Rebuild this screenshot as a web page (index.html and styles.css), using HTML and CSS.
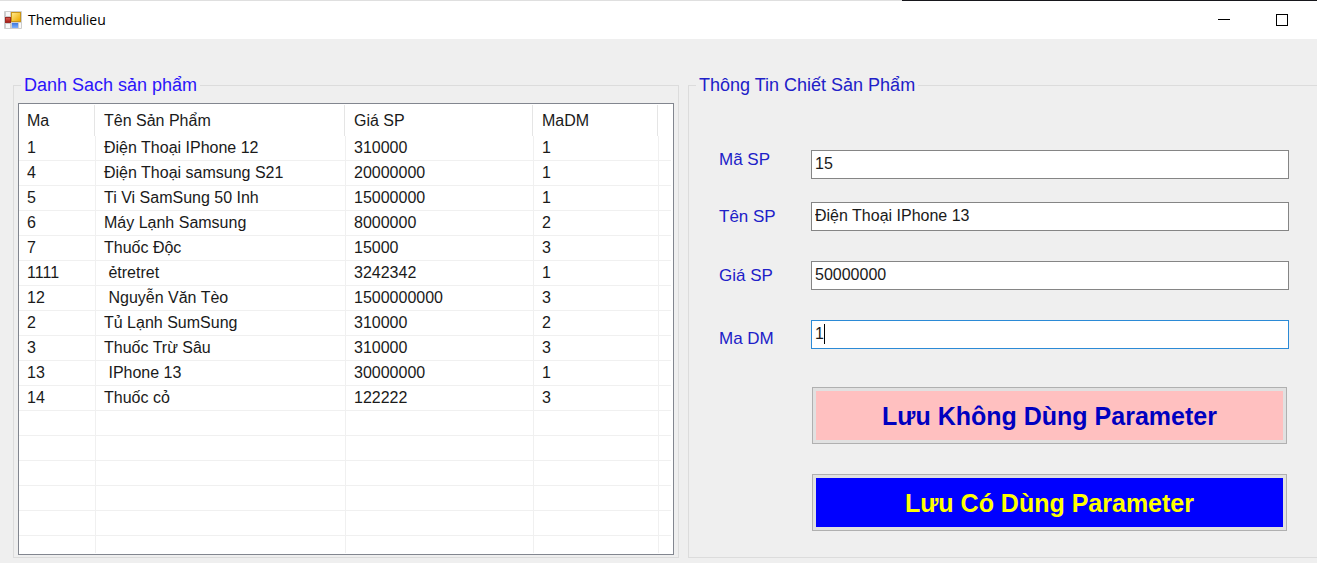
FILE: index.html
```html
<!DOCTYPE html>
<html lang="vi">
<head>
<meta charset="utf-8">
<title>Themdulieu</title>
<link rel="stylesheet" href="styles.css">
</head>
<body>
<header class="titlebar">
  <svg class="app-icon" width="18" height="18" viewBox="0 0 18 18" aria-hidden="true">
    <defs>
      <linearGradient id="gold" x1="0" y1="0" x2="1" y2="1"><stop offset="0" stop-color="#ffe98a"/><stop offset="1" stop-color="#eda900"/></linearGradient>
      <linearGradient id="sky" x1="0" y1="0" x2="0" y2="1"><stop offset="0" stop-color="#3f78dc"/><stop offset="1" stop-color="#7db0ff"/></linearGradient>
      <linearGradient id="brick" x1="0" y1="0" x2="0" y2="1"><stop offset="0" stop-color="#d9584c"/><stop offset="1" stop-color="#a81c16"/></linearGradient>
    </defs>
    <rect width="18" height="18" rx="1" fill="#cdcdcd"/>
    <path d="M2 1h4v4H2zM2 13h4v4H2zM15 12h2v5h-2z" fill="#f8f8f8"/>
    <rect x="7" y="1" width="10" height="10" fill="#c99519"/>
    <rect x="8" y="2" width="8" height="8" fill="url(#gold)"/>
    <rect x="1" y="6" width="6" height="6" fill="#9c2a24"/>
    <rect x="2" y="7" width="4" height="4" fill="url(#brick)"/>
    <rect x="8" y="12" width="6" height="5" fill="url(#sky)"/>
  </svg>
  <h1 class="title">Themdulieu</h1>
  <button class="window-button" type="button" aria-label="Minimize">
    <svg width="12" height="12" viewBox="0 0 12 12"><path d="M0 5.5h12" stroke="#000"/></svg>
  </button>
  <button class="window-button" type="button" aria-label="Maximize">
    <svg width="12" height="12" viewBox="0 0 12 12"><rect x=".5" y=".5" width="11" height="11" fill="none" stroke="#000"/></svg>
  </button>
</header>
<main class="content">
  <fieldset class="group list-group">
    <legend class="legend legend-bright">Danh Sach sản phẩm</legend>
    <div class="list-view">
      <table class="products">
        <colgroup><col class="col-id"><col class="col-name"><col class="col-price"><col class="col-cat"><col></colgroup>
        <thead><tr><th>Ma</th><th>Tên Sản Phẩm</th><th>Giá SP</th><th>MaDM</th><th></th></tr></thead>
        <tbody>
          <tr><td>1</td><td>Điện Thoại IPhone 12</td><td>310000</td><td>1</td><td></td></tr>
          <tr><td>4</td><td>Điện Thoại samsung S21</td><td>20000000</td><td>1</td><td></td></tr>
          <tr><td>5</td><td>Ti Vi SamSung 50 Inh</td><td>15000000</td><td>1</td><td></td></tr>
          <tr><td>6</td><td>Máy Lạnh Samsung</td><td>8000000</td><td>2</td><td></td></tr>
          <tr><td>7</td><td>Thuốc Độc</td><td>15000</td><td>3</td><td></td></tr>
          <tr><td>1111</td><td> ẻtretret</td><td>3242342</td><td>1</td><td></td></tr>
          <tr><td>12</td><td> Nguyễn Văn Tèo</td><td>1500000000</td><td>3</td><td></td></tr>
          <tr><td>2</td><td>Tủ Lạnh SumSung</td><td>310000</td><td>2</td><td></td></tr>
          <tr><td>3</td><td>Thuốc Trừ Sâu</td><td>310000</td><td>3</td><td></td></tr>
          <tr><td>13</td><td> IPhone 13</td><td>30000000</td><td>1</td><td></td></tr>
          <tr><td>14</td><td>Thuốc cỏ</td><td>122222</td><td>3</td><td></td></tr>
          <tr><td></td><td></td><td></td><td></td><td></td></tr>
          <tr><td></td><td></td><td></td><td></td><td></td></tr>
          <tr><td></td><td></td><td></td><td></td><td></td></tr>
          <tr><td></td><td></td><td></td><td></td><td></td></tr>
          <tr><td></td><td></td><td></td><td></td><td></td></tr>
          <tr class="partial"><td></td><td></td><td></td><td></td><td></td></tr>
        </tbody>
      </table>
    </div>
  </fieldset>
  <fieldset class="group detail-group">
    <legend class="legend">Thông Tin Chiết Sản Phẩm</legend>
    <form class="form">
      <div class="row row-top">
        <label class="label" for="ma-sp">Mã SP</label>
        <div class="field"><input class="input" id="ma-sp" type="text" value="15"></div>
      </div>
      <div class="row">
        <label class="label" for="ten-sp">Tên SP</label>
        <div class="field"><input class="input" id="ten-sp" type="text" value="Điện Thoại IPhone 13"></div>
      </div>
      <div class="row">
        <label class="label" for="gia-sp">Giá SP</label>
        <div class="field"><input class="input" id="gia-sp" type="text" value="50000000"></div>
      </div>
      <div class="row row-bottom">
        <label class="label" for="ma-dm">Ma DM</label>
        <div class="field"><input class="input input-active" id="ma-dm" type="text" value="1"><span class="caret"></span></div>
      </div>
      <div class="actions">
        <button class="action action-pink" type="button">Lưu Không Dùng Parameter</button>
        <button class="action action-blue" type="button">Lưu Có Dùng Parameter</button>
      </div>
    </form>
  </fieldset>
</main>
</body>
</html>
```
FILE: styles.css
```css
* { box-sizing: border-box; }

body {
  margin: 0;
  background: #efefef;
  color: #1a1a1a;
  font: 16px/20px "Liberation Sans", Arial, sans-serif;
  overflow: hidden;
}

.titlebar {
  display: flex;
  align-items: center;
  height: 39px;
  padding: 0 6px 0 4px;
  background: linear-gradient(90deg, #dfdfdf 68.5%, #17171c 68.5%) top / 100% 1px no-repeat #fff;
}

.title {
  flex: 1;
  margin: 0 0 0 6px;
  color: #000;
  font: 14px/20px "Open Sans", "Noto Sans", sans-serif;
}

.window-button {
  display: flex;
  align-items: center;
  justify-content: center;
  width: 58px;
  height: 38px;
  padding: 0;
  border: 0;
  background: none;
}

.content {
  display: grid;
  grid-template-columns: 666fr 629fr;
  gap: 9px;
  padding: 37px 0 5px 13px;
}

.group {
  min-width: 0;
  margin: 0;
  border: 1px solid #dcdcdc;
}

.list-group { padding: 9px 4px 2px; }

.detail-group {
  padding: 0 28px 0 30px;
  border-right: 0;
}

.legend {
  padding: 0 3px;
  color: #2020c8;
  font-size: 18px;
  line-height: 18px;
}

.list-group .legend { margin-left: 3px; }
.detail-group .legend { margin-left: -23px; }
.legend-bright { color: #2a14fa; }

.list-view {
  padding: 1px 2px 1px 0;
  border: 1px solid #82868f;
  background: #fff;
}

.products {
  width: 100%;
  border-collapse: separate;
  border-spacing: 0;
  table-layout: fixed;
}

.col-id { width: 77px; }
.col-name { width: 250px; }
.col-price { width: 188px; }
.col-cat { width: 125px; }

.products th,
.products td {
  padding: 0 0 0 8px;
  font-weight: 400;
  text-align: left;
  white-space: pre;
}

.products th {
  height: 31px;
  background: linear-gradient(#e5e5e5, #e5e5e5) right 1px top / 1px 100% no-repeat;
}

.products td {
  height: 25px;
  border-right: 1px solid #f0f0f0;
  border-bottom: 1px solid #f0f0f0;
}

.products .partial td {
  height: 17px;
  border-bottom: 0;
}

.products th:last-child { background: none; }
.products td:last-child { border-right: 0; }

.form {
  display: flex;
  flex-direction: column;
  gap: 30px;
  padding-top: 56px;
}

.row {
  display: grid;
  grid-template-columns: 92px 1fr;
  align-items: center;
}

.row-top {
  align-items: start;
  margin-bottom: -7px;
}

.row-bottom { align-items: end; }

.label {
  color: #2020c8;
  font-size: 17px;
}

.field { position: relative; }

.input {
  display: block;
  width: 100%;
  height: 29px;
  padding: 0 3px 2px;
  border: 1px solid #858585;
  border-radius: 0;
  background: #fff;
  color: #1a1a1a;
  font: inherit;
  outline: 0;
}

.input-active { border-color: #2b8ad6; }

.caret {
  position: absolute;
  top: 4px;
  left: 13px;
  width: 1px;
  height: 20px;
  background: #000;
}

.actions {
  display: grid;
  gap: 30px;
  padding: 8px 2px 0 93px;
}

.action {
  height: 57px;
  padding: 0;
  border: 1px solid #b0b0b0;
  box-shadow: inset 0 0 0 3px #e1e1e1;
  font: bold 25px/30px "Liberation Sans", Arial, sans-serif;
}

.action-pink {
  background: #ffc0c0;
  color: #0000c0;
}

.action-blue {
  background: #0000ff;
  color: #ffff00;
}
```
